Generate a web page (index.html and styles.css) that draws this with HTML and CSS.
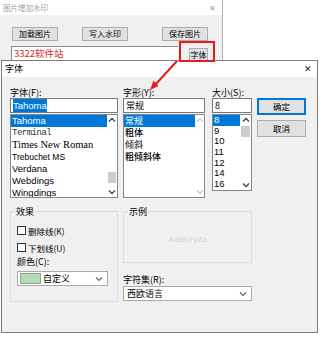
FILE: index.html
```html
<!DOCTYPE html>
<html lang="zh">
<head>
    <meta charset="UTF-8">
    <title>字体</title>
    <link rel="stylesheet" href="styles.css">
</head>
<body>
    <div class="desk">
        <div class="app">
            <div class="app-title">
                <span>图片增加水印</span>
                <span class="app-close">✕</span>
            </div>
            <div class="app-body">
                <div class="app-buttons">
                    <div class="btn btn-wide">加载图片</div>
                    <div class="btn btn-wide btn-write">写入水印</div>
                    <div class="btn btn-wide btn-save">保存图片</div>
                </div>
                <div class="app-row">
                    <div class="wm-input">3322软件站</div>
                    <div class="btn btn-font">字体</div>
                </div>
            </div>
        </div>

        <div class="dialog">
            <div class="dlg-title">
                <span>字体</span>
                <span class="dlg-close">✕</span>
            </div>
            <div class="dlg-body">
                <div class="top-row">
                    <div class="col col-font">
                        <div class="lbl">字体(F):</div>
                        <div class="field"><span class="sel-text">Tahoma</span></div>
                        <div class="list list-font">
                            <div class="items">
                                <div class="item selected">Tahoma</div>
                                <div class="item f-terminal">Terminal</div>
                                <div class="item f-times">Times New Roman</div>
                                <div class="item f-trebuchet">Trebuchet MS</div>
                                <div class="item">Verdana</div>
                                <div class="item">Webdings</div>
                                <div class="item">Wingdings</div>
                            </div>
                            <div class="sbar">
                                <div class="sbtn"><svg width="8" height="6" viewBox="0 0 8 6"><polyline points="1,4.5 4,1.5 7,4.5" fill="none" stroke="#404040" stroke-width="1.3"/></svg></div>
                                <div class="strack track-low"><div class="thumb"></div></div>
                                <div class="sbtn"><svg width="8" height="6" viewBox="0 0 8 6"><polyline points="1,1.5 4,4.5 7,1.5" fill="none" stroke="#404040" stroke-width="1.3"/></svg></div>
                            </div>
                        </div>
                    </div>

                    <div class="col col-style">
                        <div class="lbl">字形(Y):</div>
                        <div class="field">常规</div>
                        <div class="list list-style">
                            <div class="items">
                                <div class="item selected">常规</div>
                                <div class="item bold">粗体</div>
                                <div class="item">倾斜</div>
                                <div class="item bold">粗倾斜体</div>
                            </div>
                            <div class="sbar sbar-thin">
                                <div class="sbtn"><svg width="8" height="6" viewBox="0 0 8 6"><polyline points="1,4.5 4,1.5 7,4.5" fill="none" stroke="#c8c8c8" stroke-width="1.2"/></svg></div>
                                <div class="strack"></div>
                                <div class="sbtn"><svg width="8" height="6" viewBox="0 0 8 6"><polyline points="1,1.5 4,4.5 7,1.5" fill="none" stroke="#c8c8c8" stroke-width="1.2"/></svg></div>
                            </div>
                        </div>
                    </div>

                    <div class="col col-size">
                        <div class="lbl">大小(S):</div>
                        <div class="field">8</div>
                        <div class="list list-size">
                            <div class="items">
                                <div class="item selected">8</div>
                                <div class="item">9</div>
                                <div class="item">10</div>
                                <div class="item">11</div>
                                <div class="item">12</div>
                                <div class="item">14</div>
                                <div class="item">16</div>
                            </div>
                            <div class="sbar">
                                <div class="sbtn"><svg width="8" height="6" viewBox="0 0 8 6"><polyline points="1,4.5 4,1.5 7,4.5" fill="none" stroke="#404040" stroke-width="1.3"/></svg></div>
                                <div class="strack"><div class="thumb"></div></div>
                                <div class="sbtn"><svg width="8" height="6" viewBox="0 0 8 6"><polyline points="1,1.5 4,4.5 7,1.5" fill="none" stroke="#404040" stroke-width="1.3"/></svg></div>
                            </div>
                        </div>
                    </div>

                    <div class="col col-buttons">
                        <div class="btn dlg-btn default">确定</div>
                        <div class="btn dlg-btn">取消</div>
                    </div>
                </div>

                <div class="bottom-row">
                    <fieldset class="group group-effects">
                        <legend>效果</legend>
                        <div class="check-row"><span class="check"></span>删除线(K)</div>
                        <div class="check-row"><span class="check"></span>下划线(U)</div>
                        <div class="lbl">颜色(C):</div>
                        <div class="combo combo-color">
                            <span class="swatch"></span>
                            <span class="combo-text">自定义</span>
                            <svg class="chev" width="8" height="6" viewBox="0 0 8 6"><polyline points="1,1.5 4,4.5 7,1.5" fill="none" stroke="#606060" stroke-width="1.1"/></svg>
                        </div>
                    </fieldset>

                    <div class="col-right">
                        <fieldset class="group group-sample">
                            <legend>示例</legend>
                            <div class="sample">AaBbYyZz</div>
                        </fieldset>
                        <div class="lbl lbl-charset">字符集(R):</div>
                        <div class="combo combo-charset">
                            <span class="combo-text">西欧语言</span>
                            <svg class="chev" width="8" height="6" viewBox="0 0 8 6"><polyline points="1,1.5 4,4.5 7,1.5" fill="none" stroke="#606060" stroke-width="1.1"/></svg>
                        </div>
                    </div>
                </div>
            </div>
        </div>

        <!-- callout drawn over the screenshot -->
        <div class="mark"></div>
        <svg class="arrow" width="320" height="341" viewBox="0 0 320 341">
            <line x1="177" y1="61" x2="155" y2="85" stroke="#e21b1b" stroke-width="2"/>
            <polygon points="150,90 158.5,86 153.5,80.5" fill="#e21b1b"/>
        </svg>
    </div>
</body>
</html>
```

FILE: styles.css
```css
body {
    margin: 0;
    background-color: #ffffff;
    font-family: "Noto Sans CJK SC", "Liberation Sans", sans-serif;
    font-size: 9px;
    color: #000000;
}

.desk {
    position: relative;
    width: 320px;
    height: 341px;
    overflow: hidden;
}

/* base window behind the dialog */
.app {
    width: 223px;
    border-right: 1px solid #b5b5b5;
    box-sizing: border-box;
}

.app-title {
    height: 15px;
    display: flex;
    align-items: center;
    justify-content: space-between;
    padding: 0 6px 0 3px;
    background-color: #ffffff;
    color: #a0a0a0;
    font-size: 7.5px;
    line-height: 15px;
}

.app-close {
    font-size: 8px;
    color: #999999;
}

.app-body {
    height: 45px;
    background-color: #f0f0f0;
    overflow: hidden;
}

.app-buttons {
    display: flex;
    margin-top: 12px;
    padding-left: 12px;
}

.btn {
    display: flex;
    align-items: center;
    justify-content: center;
    box-sizing: border-box;
    background-color: #e1e1e1;
    border: 1px solid #adadad;
    line-height: 1;
}

.btn-wide {
    width: 46px;
    height: 14px;
    font-size: 8px;
}

.btn-write {
    margin-left: 24px;
}

.btn-save {
    margin-left: 34px;
}

.app-row {
    display: flex;
    align-items: flex-end;
    margin-top: 5px;
    padding-left: 11px;
}

.wm-input {
    width: 167px;
    height: 15px;
    box-sizing: border-box;
    background-color: #ffffff;
    border: 1px solid #8a8a8a;
    border-right: none;
    padding-left: 2px;
    color: #d42a2a;
    font-size: 9.5px;
    line-height: 13px;
}

.btn-font {
    width: 19px;
    height: 13px;
    margin-left: 11px;
    font-size: 8px;
}

/* font dialog */
.dialog {
    width: 317px;
    height: 273px;
    margin-left: 1px;
    box-sizing: border-box;
    border: 1px solid #7a7a7a;
    background-color: #f0f0f0;
}

.dlg-title {
    height: 16px;
    display: flex;
    align-items: center;
    justify-content: space-between;
    padding: 0 5px 0 3px;
    background-color: #ffffff;
    font-size: 9px;
    line-height: 16px;
}

.dlg-close {
    font-size: 9px;
    color: #222222;
}

.dlg-body {
    padding: 10px 0 0 8px;
}

.top-row {
    display: flex;
}

.lbl {
    height: 11px;
    line-height: 11px;
    font-size: 9px;
    white-space: nowrap;
}

.col-font {
    width: 108px;
}

.col-style {
    width: 82px;
    margin-left: 5px;
}

.col-size {
    width: 40px;
    margin-left: 7px;
}

.col-buttons {
    width: 49px;
    margin-left: 5px;
    padding-top: 11px;
}

.field {
    height: 15px;
    box-sizing: border-box;
    background-color: #ffffff;
    border: 1px solid #7a7a7a;
    padding-left: 2px;
    line-height: 13px;
    font-size: 9px;
    white-space: nowrap;
    overflow: hidden;
}

.sel-text {
    background-color: #0078d7;
    color: #ffffff;
    font-family: "Liberation Sans", sans-serif;
    font-size: 9.5px;
    padding: 1px 0;
}

.list {
    display: flex;
    margin-top: 1px;
    height: 84px;
    box-sizing: border-box;
    background-color: #ffffff;
    border: 1px solid #828790;
    overflow: hidden;
}

.items {
    flex: 1;
    min-width: 0;
}

.item {
    height: 12px;
    line-height: 12px;
    padding-left: 1px;
    white-space: nowrap;
    font-family: "Liberation Sans", "Noto Sans CJK SC", sans-serif;
    font-size: 9.5px;
}

.item.selected {
    background-color: #0078d7;
    color: #ffffff;
}

.f-terminal {
    font-family: "Liberation Mono", monospace;
    font-size: 9px;
    letter-spacing: -0.5px;
    color: #333333;
}

.f-times {
    font-family: "Liberation Serif", serif;
    font-size: 10.5px;
}

.f-trebuchet {
    font-size: 8.5px;
}

.list-style .item {
    font-family: "Noto Sans CJK SC", sans-serif;
    font-size: 9px;
}

.item.bold {
    font-weight: 500;
}

.list-size {
    height: 77px;
}

.list-size .item {
    height: 10.7px;
    line-height: 10.7px;
}

.sbar {
    width: 10px;
    display: flex;
    flex-direction: column;
    background-color: #ffffff;
}

.sbar-thin {
    width: 9px;
}

.list-size .sbar {
    width: 11px;
}

.sbtn {
    height: 10px;
    display: flex;
    align-items: center;
    justify-content: center;
}

.strack {
    flex: 1;
    display: flex;
    flex-direction: column;
    padding: 1px 1px;
}

.track-low {
    justify-content: flex-end;
    padding-bottom: 4px;
}

.thumb {
    height: 11px;
    background-color: #cdcdcd;
}

.dlg-btn {
    height: 17px;
    font-size: 8.5px;
}

.dlg-btn + .dlg-btn {
    margin-top: 5px;
}

.dlg-btn.default {
    border: 1px solid #0078d7;
    box-shadow: inset 0 0 0 1px #0078d7;
}

/* lower half */
.bottom-row {
    display: flex;
    margin-top: 8px;
}

.group {
    margin: 0;
    padding: 0 0 0 6px;
    border: 1px solid #dcdcdc;
    box-sizing: border-box;
    min-width: 0;
}

.group legend {
    padding: 0 1px;
    margin-left: -2px;
    height: 11px;
    line-height: 11px;
    font-size: 9px;
}

.group-effects {
    width: 108px;
    height: 96px;
    padding-top: 5px;
}

.check-row {
    display: flex;
    align-items: center;
    height: 17px;
    font-size: 8.5px;
}

.check {
    width: 7px;
    height: 7px;
    border: 1px solid #333333;
    background-color: #ffffff;
    margin-right: 2px;
}

.combo {
    display: flex;
    align-items: center;
    height: 15px;
    box-sizing: border-box;
    background-color: #ffffff;
    border: 1px solid #a9a9a9;
    font-size: 9px;
}

.combo-color {
    width: 91px;
    margin-top: 4px;
    padding-left: 2px;
}

.swatch {
    width: 19px;
    height: 9px;
    background-color: #b3dcb4;
    border: 1px solid #8aa88b;
    margin-right: 2px;
}

.combo-text {
    flex: 1;
    line-height: 13px;
}

.chev {
    margin-right: 4px;
}

.col-right {
    width: 129px;
    margin-left: 5px;
}

.group-sample {
    height: 57px;
    display: flex;
    align-items: center;
    justify-content: center;
}

.sample {
    width: 100%;
    padding-right: 6px;
    text-align: center;
    color: #c3dec4;
    font-family: "Liberation Sans", sans-serif;
    font-size: 8px;
}

.lbl-charset {
    margin-top: 11px;
}

.combo-charset {
    margin-top: 1px;
    padding-left: 3px;
}

/* red callout over the screenshot */
.mark {
    position: absolute;
    left: 179px;
    top: 41px;
    width: 36px;
    height: 21px;
    box-sizing: border-box;
    border: 2px solid #e21b1b;
}

.arrow {
    position: absolute;
    left: 0;
    top: 0;
    pointer-events: none;
}
```
